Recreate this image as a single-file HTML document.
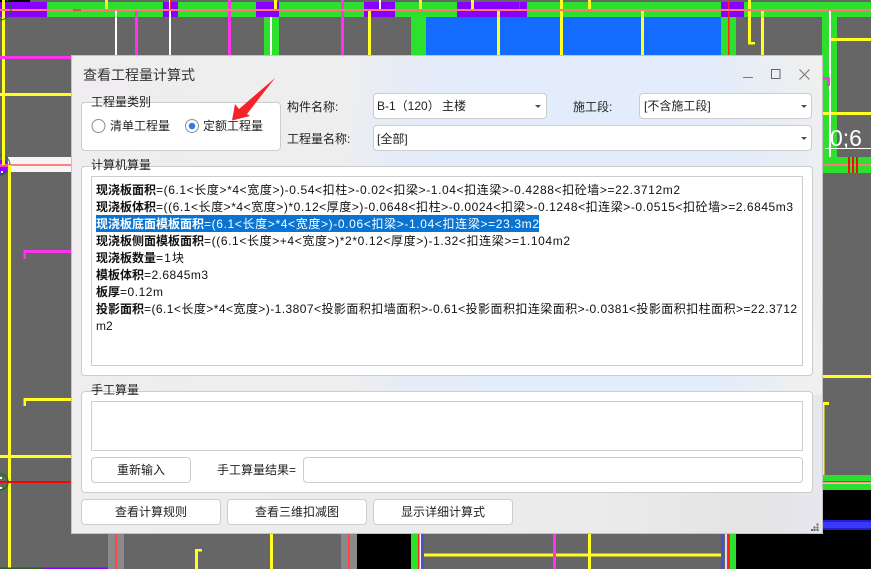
<!DOCTYPE html>
<html lang="zh"><head><meta charset="utf-8"><title>查看工程量计算式</title>
<style>
html,body{margin:0;padding:0;width:871px;height:569px;overflow:hidden;background:#666}
body{position:relative;font-family:"Liberation Sans","Noto Sans CJK SC",sans-serif;font-size:12px;color:#222}
svg{position:absolute;left:0;top:0}
.dlg{position:absolute;left:71px;top:55px;width:752px;height:479px;box-sizing:border-box;border:1px solid #c4c4c4;
background:
radial-gradient(ellipse 260px 330px at 520px 170px,#e3ecfb 0,#e3ecfb 62%,rgba(227,236,251,0) 100%),
linear-gradient(90deg,#efedef 0,#eeeeee 35%,#e9ecf4 45%,#e5ebf8 60%,#e5ebf8 86%,#f0f1ee 90%,#f0f0ee 100%);}
.bot{position:absolute;left:72px;top:395px;width:750px;height:138px;background:linear-gradient(90deg,#eeeeee 0,#ececec 40%,#ebebeb 70%,#e4e4e4 90%,#e6e6ee 100%)}
.abs{position:absolute;box-sizing:border-box}
.box{position:absolute;box-sizing:border-box;background:#fff;border:1px solid #cdcdcd;border-radius:4px}
.sq{border-radius:0}
.t{position:absolute;line-height:16px;white-space:nowrap}
.btn{position:absolute;box-sizing:border-box;background:#fff;border:1px solid #cdcdcd;border-radius:4px;text-align:center;line-height:24px;height:26px}
.arr{position:absolute;width:0;height:0;border-left:3px solid transparent;border-right:3px solid transparent;border-top:3px solid #4d4d5a}
</style></head><body>

<svg width="871" height="569" viewBox="0 0 871 569" xmlns="http://www.w3.org/2000/svg">
<rect width="871" height="569" fill="#666"/>
<rect x="0" y="0" width="30" height="2" fill="#000"/>
<!-- top band -->
<rect x="47" y="2" width="824" height="15" fill="#2ee02e"/>
<rect x="0" y="2" width="47" height="15" fill="#8a00ff"/>
<rect x="163" y="2" width="15" height="15" fill="#8a00ff"/>
<rect x="256" y="2" width="23" height="15" fill="#8a00ff"/>
<rect x="364" y="2" width="31" height="15" fill="#8a00ff"/>
<rect x="457" y="2" width="70" height="15" fill="#8a00ff"/>
<rect x="721" y="2" width="23" height="15" fill="#8a00ff"/>
<!-- blue -->
<rect x="426" y="17" width="295" height="40" fill="#146cff"/>
<!-- green columns -->
<rect x="264" y="17" width="15" height="40" fill="#2ee02e"/>
<rect x="411" y="17" width="15" height="40" fill="#2ee02e"/>
<rect x="721" y="17" width="15" height="40" fill="#2ee02e"/>
<rect x="822" y="17" width="15" height="156" fill="#2ee02e"/>
<rect x="823" y="157" width="48" height="16" fill="#2ee02e"/>
<!-- white band left -->
<rect x="8" y="157" width="63" height="15" fill="#f6f6f6"/>
<rect x="8" y="164" width="63" height="2" fill="#ff8080"/>
<path d="M0 160H6L8 165L7 171L3 175H0Z" fill="#8a00ff"/>
<circle cx="0" cy="165" r="10" fill="none" stroke="#0a7a0a" stroke-width="1"/>
<rect x="0" y="164" width="8" height="3" fill="#ff40d0"/>
<rect x="1" y="171" width="2" height="2" fill="#fff"/>
<!-- verticals top -->
<g fill="#ffff22">
<rect x="105" y="0" width="3" height="9"/><rect x="274" y="0" width="3" height="9"/><rect x="419" y="0" width="3" height="9"/>
<rect x="471" y="0" width="3" height="9"/><rect x="588" y="0" width="3" height="9"/>
<rect x="368" y="10" width="3" height="47"/><rect x="497" y="10" width="3" height="47"/><rect x="560" y="0" width="3" height="57"/>
<rect x="641" y="10" width="3" height="47"/><rect x="761" y="10" width="3" height="47"/>
<rect x="748" y="0" width="3" height="44"/><rect x="748" y="42" width="7" height="2.5"/>
<rect x="2" y="0" width="3" height="165"/>
<rect x="0" y="93" width="71" height="3"/><rect x="830" y="38" width="41" height="3"/><rect x="823" y="112" width="48" height="3"/>
<rect x="8" y="165" width="3" height="404"/>
<rect x="0" y="455" width="71" height="3"/><rect x="24" y="398" width="47" height="3"/><rect x="23.5" y="398" width="2.5" height="8"/>
<rect x="823" y="375" width="48" height="3"/><rect x="823" y="402" width="6" height="3"/><rect x="823" y="403" width="1.5" height="72"/>
</g>
<g fill="#fff">
<rect x="115" y="10" width="2" height="47"/><rect x="379" y="0" width="2" height="9"/><rect x="169" y="0" width="2" height="57"/><rect x="270" y="17" width="2" height="40"/><rect x="829" y="10" width="2" height="147"/>
<rect x="825" y="148" width="46" height="1"/>
</g>
<g fill="#ff33ee">
<rect x="135" y="10" width="3" height="47"/><rect x="228" y="0" width="3" height="57"/><rect x="341" y="0" width="3" height="57"/>
<rect x="0" y="56" width="71" height="3"/><rect x="24" y="250" width="47" height="3"/><rect x="23.5" y="250" width="2.5" height="9"/>
<rect x="823" y="77" width="7" height="3"/><rect x="827" y="77" width="3" height="9"/>
</g>
<rect x="728" y="0" width="1.5" height="57" fill="#ff2020"/>
<rect x="0" y="9" width="871" height="2" fill="#ff7878"/>
<rect x="170" y="0" width="1" height="9" fill="#ff2020"/>
<rect x="519" y="0" width="1" height="9" fill="#ff2020"/>
<rect x="73" y="9" width="8" height="2" fill="#ff3a6a"/>
<circle cx="0" cy="9" r="11" fill="none" stroke="#0a7a0a" stroke-width="1"/>
<!-- right side -->
<rect x="823" y="164" width="48" height="2" fill="#ff7878"/>
<g fill="#ee1010"><rect x="848" y="157" width="2" height="16"/><rect x="852" y="157" width="2" height="16"/><rect x="856" y="157" width="2" height="16"/></g>
<text x="830" y="146" font-family="Liberation Sans,sans-serif" font-size="23" fill="#fff">0;6</text>
<rect x="823" y="475" width="48" height="15" fill="#2ee02e"/>
<rect x="823" y="481" width="48" height="1.5" fill="#ff2020"/><rect x="823" y="482.5" width="48" height="1" fill="#fff"/>
<rect x="823" y="490" width="48" height="79" fill="#000"/>
<rect x="823" y="520" width="48" height="10" fill="#2222cc"/><rect x="823" y="522" width="48" height="6" fill="#3838ff"/>
<!-- left lower -->
<rect x="0" y="481" width="71" height="2" fill="#ff0000"/>
<circle cx="0" cy="482" r="8" fill="none" stroke="#0a7a0a" stroke-width="1.4"/>
<rect x="0" y="477" width="2" height="2" fill="#fff"/><rect x="0" y="487" width="2" height="2" fill="#fff"/>
<rect x="0" y="567.5" width="43" height="1.5" fill="#2e5e2e"/><rect x="43" y="567.5" width="81" height="1.5" fill="#8a00ff"/>
<!-- bottom -->
<rect x="108" y="534" width="16" height="35" fill="#8a8a8a"/><rect x="115.5" y="534" width="1.5" height="35" fill="#ff4040"/>
<rect x="341" y="534" width="16" height="35" fill="#8a8a8a"/><rect x="348" y="534" width="1.5" height="35" fill="#ff4040"/>
<rect x="357" y="534" width="54" height="35" fill="#000"/>
<rect x="411" y="534" width="7" height="35" fill="#2ee02e"/><rect x="418" y="534" width="1.5" height="35" fill="#ff2020"/><rect x="419.5" y="534" width="1.5" height="35" fill="#fff"/><rect x="421" y="534" width="3" height="35" fill="#5050c8"/>
<rect x="270" y="534" width="3" height="35" fill="#ffff22"/>
<rect x="195" y="549" width="7" height="2.5" fill="#ffff22"/><rect x="195" y="549" width="3" height="20" fill="#ffff22"/>
<rect x="424" y="553.5" width="297" height="3" fill="#ffff22"/>
<rect x="588" y="534" width="3" height="35" fill="#ffff22"/>
<rect x="553" y="534" width="3" height="35" fill="#ff33ee"/>
<rect x="721" y="534" width="3" height="35" fill="#5050c8"/><rect x="725" y="534" width="2" height="35" fill="#dcdcf0"/><rect x="727.5" y="534" width="1.5" height="35" fill="#ff2020"/>
<rect x="730" y="534" width="6" height="35" fill="#2ee02e"/><rect x="736" y="534" width="135" height="35" fill="#000"/>
</svg>

<div class="dlg"></div>
<div class="bot"></div>

<div class="t" style="left:83px;top:67px;font-size:14px;line-height:17px;color:#333">查看工程量计算式</div>

<svg width="871" height="569" viewBox="0 0 871 569" style="z-index:3;pointer-events:none" xmlns="http://www.w3.org/2000/svg">
<path d="M743 77.5h10" stroke="#777" stroke-width="1" fill="none"/>
<rect x="771.5" y="69.5" width="8.5" height="9" stroke="#666" fill="none"/>
<path d="M799.5 69.5l10 10M809.5 69.5l-10 10" stroke="#777" stroke-width="1.1" fill="none"/>
<g fill="#666"><rect x="816.5" y="523.5" width="2" height="2"/><rect x="813.5" y="526.5" width="2" height="2"/><rect x="816.5" y="526.5" width="2" height="2"/><rect x="811" y="529" width="2" height="2"/><rect x="813.5" y="529" width="2" height="2"/><rect x="816.5" y="529" width="2" height="2"/></g>
</svg>

<!-- group 1 -->
<div class="box" style="left:81px;top:102px;width:200px;height:49px"></div>
<div class="t" style="left:91px;top:94px">工程量类别</div>
<svg width="871" height="569" viewBox="0 0 871 569" style="z-index:2" xmlns="http://www.w3.org/2000/svg">
<circle cx="98.5" cy="126" r="6.5" fill="#fff" stroke="#8f8f8f"/>
<circle cx="192" cy="126" r="6.5" fill="#fff" stroke="#8f8f8f"/>
<circle cx="192" cy="126" r="3.3" fill="#2b7fe0"/>
</svg>
<div class="t" style="left:110px;top:118px;z-index:2">清单工程量</div>
<div class="t" style="left:203px;top:118px;z-index:2">定额工程量</div>

<div class="t" style="left:287px;top:99px">构件名称:</div>
<div class="box" style="left:373px;top:93px;width:174px;height:26px"></div>
<div class="t" style="left:377px;top:98px;z-index:2">B-1（120）</div>
<div class="t" style="left:442px;top:98px;z-index:2">主楼</div>
<div class="arr" style="left:535px;top:105px;z-index:2"></div>
<div class="t" style="left:573px;top:99px">施工段:</div>
<div class="box" style="left:639px;top:93px;width:173px;height:26px"></div>
<div class="t" style="left:644px;top:98px;z-index:2">[不含施工段]</div>
<div class="arr" style="left:801px;top:105px;z-index:2"></div>
<div class="t" style="left:287px;top:131px">工程量名称:</div>
<div class="box" style="left:373px;top:125px;width:439px;height:26px"></div>
<div class="t" style="left:377px;top:131px;z-index:2">[全部]</div>
<div class="arr" style="left:801px;top:137px;z-index:2"></div>

<!-- group 2 -->
<div class="box" style="left:81px;top:166px;width:732px;height:210px"></div>
<div class="t" style="left:91px;top:157px;z-index:2">计算机算量</div>
<div class="box sq" style="left:91px;top:176px;width:712px;height:190px"></div>
<div class="abs" style="left:96px;top:215px;width:443px;height:17px;background:#0a74d2;z-index:2"></div>

<svg width="871" height="569" viewBox="0 0 871 569" style="z-index:3" font-family="Liberation Sans,Noto Sans CJK SC,sans-serif" font-size="12" fill="#111" xmlns="http://www.w3.org/2000/svg">
<g font-weight="700">
<text x="96" y="194">现浇板面积</text>
<text x="96" y="211">现浇板体积</text>
<text x="96" y="228" fill="#fff">现浇板底面模板面积</text>
<text x="96" y="245">现浇板侧面模板面积</text>
<text x="96" y="262">现浇板数量</text>
<text x="96" y="279">模板体积</text>
<text x="96" y="296">板厚</text>
<text x="96" y="313">投影面积</text>
</g>
<text x="156" y="194" textLength="524" lengthAdjust="spacing">=(6.1&lt;长度&gt;*4&lt;宽度&gt;)-0.54&lt;扣柱&gt;-0.02&lt;扣梁&gt;-1.04&lt;扣连梁&gt;-0.4288&lt;扣砼墙&gt;=22.3712m2</text>
<text x="156" y="211" textLength="637" lengthAdjust="spacing">=((6.1&lt;长度&gt;*4&lt;宽度&gt;)*0.12&lt;厚度&gt;)-0.0648&lt;扣柱&gt;-0.0024&lt;扣梁&gt;-0.1248&lt;扣连梁&gt;-0.0515&lt;扣砼墙&gt;=2.6845m3</text>
<text x="204" y="228" textLength="335" lengthAdjust="spacing" fill="#fff">=(6.1&lt;长度&gt;*4&lt;宽度&gt;)-0.06&lt;扣梁&gt;-1.04&lt;扣连梁&gt;=23.3m2</text>
<text x="204" y="245" textLength="366" lengthAdjust="spacing">=((6.1&lt;长度&gt;+4&lt;宽度&gt;)*2*0.12&lt;厚度&gt;)-1.32&lt;扣连梁&gt;=1.104m2</text>
<text x="156" y="262" textLength="28" lengthAdjust="spacing">=1块</text>
<text x="144" y="279" textLength="64" lengthAdjust="spacing">=2.6845m3</text>
<text x="120" y="296" textLength="43" lengthAdjust="spacing">=0.12m</text>
<text x="144" y="313" textLength="653" lengthAdjust="spacing">=(6.1&lt;长度&gt;*4&lt;宽度&gt;)-1.3807&lt;投影面积扣墙面积&gt;-0.61&lt;投影面积扣连梁面积&gt;-0.0381&lt;投影面积扣柱面积&gt;=22.3712</text>
<text x="96" y="330">m2</text>
</svg>

<!-- group 3 -->
<div class="box" style="left:81px;top:391px;width:732px;height:102px"></div>
<div class="t" style="left:91px;top:382px;z-index:2">手工算量</div>
<div class="box sq" style="left:91px;top:401px;width:712px;height:50px"></div>
<div class="btn" style="left:91px;top:457px;width:100px">重新输入</div>
<div class="t" style="left:217px;top:462px">手工算量结果=</div>
<div class="box" style="left:303px;top:457px;width:500px;height:26px"></div>
<div class="btn" style="left:81px;top:499px;width:140px">查看计算规则</div>
<div class="btn" style="left:227px;top:499px;width:140px">查看三维扣减图</div>
<div class="btn" style="left:373px;top:499px;width:140px">显示详细计算式</div>

<!-- red arrow -->
<svg width="871" height="569" viewBox="0 0 871 569" style="z-index:5" xmlns="http://www.w3.org/2000/svg">
<path d="M232 120.5L235 104L239 109L275 78L247 114L250 116Z" fill="#f5222a"/>
</svg>
</body></html>
